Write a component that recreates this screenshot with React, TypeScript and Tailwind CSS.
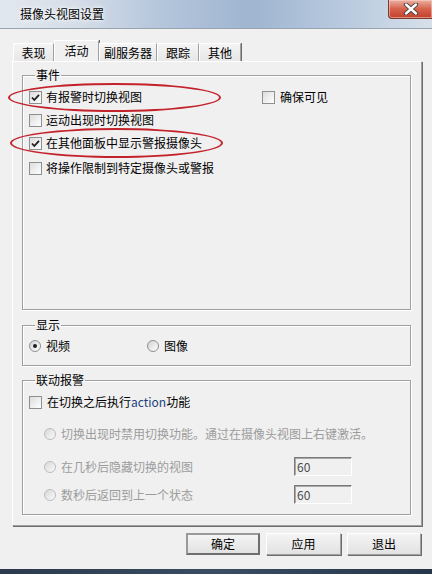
import React from 'react';

const Check: React.FC<{ checked?: boolean }> = ({ checked }) => (
  <span className="relative flex h-[13px] w-[13px] shrink-0 items-center justify-center border border-[#8e8f8f] bg-[linear-gradient(135deg,#dcdcdc,#ffffff)]">
    {checked && (
      <svg width="11" height="11" viewBox="0 0 11 11">
        <path d="M2 5.5 L4.3 8 L9 2.8" fill="none" stroke="#1e1e1e" strokeWidth="1.8" />
      </svg>
    )}
  </span>
);

const Radio: React.FC<{ checked?: boolean; disabled?: boolean }> = ({ checked, disabled }) => (
  <span
    className={`flex h-[12px] w-[12px] shrink-0 items-center justify-center rounded-full border ${
      disabled ? 'border-[#bdbdbd] bg-[linear-gradient(135deg,#d8d8d8,#fafafa)]' : 'border-[#8e8f8f] bg-[linear-gradient(135deg,#d2d2d2,#ffffff)]'
    }`}
  >
    {checked && <span className="h-[4px] w-[4px] rounded-full bg-[#1e1e1e]" />}
  </span>
);

const Tab: React.FC<{ label: string; w: string; active?: boolean }> = ({ label, w, active }) => (
  <div
    className={`flex items-center justify-center border-l border-t border-white border-r border-r-[#a0a0a0] shadow-[1px_0_0_#6d6d6d] ${w} ${
      active ? 'h-[22px] bg-[#f0f0f0] pb-[2px]' : 'h-[19px] bg-[linear-gradient(#f4f4f4,#e6e6e6)]'
    }`}
  >
    {label}
  </div>
);

const NumBox: React.FC<{ value: string }> = ({ value }) => (
  <div className="flex h-[19px] w-[58px] items-center border-l border-t border-[#7a7a7a] border-b border-r border-b-white border-r-white bg-[#f0f0f0] pl-[2px] text-[#4a4a4a] shadow-[inset_1px_1px_0_#a8a8a8]">
    {value}
  </div>
);

const group = 'border border-[#a0a0a0] shadow-[1px_1px_0_#fff,inset_1px_1px_0_#fff]';

const Btn: React.FC<{ label: string; w: string; primary?: boolean }> = ({ label, w, primary }) => (
  <button
    className={`flex h-[22px] items-center justify-center bg-[linear-gradient(#f4f4f4,#e2e2e2)] ${w} ${
      primary
        ? 'border-2 border-[#6e6e6e] border-t-[#9a9a9a] border-l-[#9a9a9a]'
        : 'border border-[#a0a0a0] border-t-white border-l-white shadow-[1px_1px_0_#6d6d6d]'
    }`}
  >
    {label}
  </button>
);

export default function App() {
  return (
    <div className="relative flex h-[574px] w-[432px] flex-col overflow-hidden bg-[#f0f0f0] font-['Noto_Sans_CJK_SC',sans-serif] text-[12px] leading-[16px] text-black">
      {/* title bar */}
      <div className="flex h-[29px] items-start border-b border-[#9aa3ae] bg-[linear-gradient(90deg,#e2e8ef_0%,#d4dde8_18%,#b3c5db_38%,#9fb5d0_58%,#b8cadf_80%,#d6e0ea_100%)]">
        <div className="ml-[20px] mt-[6px] text-[12px] leading-[16px] [text-shadow:0_0_6px_#fff,0_0_3px_#fff]">摄像头视图设置</div>
        <div className="ml-auto flex h-[19px] w-[44px] items-center justify-center rounded-bl-[4px] border border-t-0 border-r-0 border-[#7a3a30] bg-[linear-gradient(#ebb0a3,#d6624c_50%,#c2402b)] shadow-[inset_0_0_0_1px_rgba(255,220,210,0.5)]">
          <svg width="16" height="12" viewBox="0 0 16 12">
            <path d="M3 1.5 L13 10.5 M13 1.5 L3 10.5" stroke="#3b3b3b" strokeWidth="4.2" strokeLinecap="round" />
            <path d="M3 1.5 L13 10.5 M13 1.5 L3 10.5" stroke="#fff" strokeWidth="2.4" strokeLinecap="round" />
          </svg>
        </div>
      </div>

      {/* tabs + panel */}
      <div className="flex flex-col px-[12px] pt-[12px]">
        <div className="ml-[1px] flex h-[21px] items-end">
          <Tab label="表现" w="w-[41px]" />
          <Tab label="活动" w="w-[45px]" active />
          <Tab label="副服务器" w="w-[58px]" />
          <Tab label="跟踪" w="w-[42px]" />
          <Tab label="其他" w="w-[42px]" />
        </div>
        <div className="-mt-[1px] flex h-[465px] w-[410px] flex-col border-l border-t border-white border-b border-r border-b-[#a0a0a0] border-r-[#a0a0a0] pl-[9px] pt-[5px] shadow-[1px_1px_0_#6d6d6d]">
          {/* 事件 */}
          <fieldset className={`h-[243px] w-[389px] ${group} flex flex-col pl-[6px]`}>
            <legend className="ml-[6px] px-[1px] leading-[16px]">事件</legend>
            <div className="mt-[6px] flex h-[16px] items-center">
              <div className="flex w-[233px] items-center gap-[4px]">
                <Check checked />
                <span>有报警时切换视图</span>
              </div>
              <div className="flex items-center gap-[5px]">
                <Check />
                <span>确保可见</span>
              </div>
            </div>
            <div className="mt-[7px] flex h-[16px] items-center gap-[4px]">
              <Check />
              <span>运动出现时切换视图</span>
            </div>
            <div className="mt-[7px] flex h-[16px] items-center gap-[4px]">
              <Check checked />
              <span>在其他面板中显示警报摄像头</span>
            </div>
            <div className="mt-[9px] flex h-[16px] items-center gap-[4px]">
              <Check />
              <span>将操作限制到特定摄像头或警报</span>
            </div>
          </fieldset>

          {/* 显示 */}
          <fieldset className={`mt-[7px] h-[49px] w-[389px] ${group} flex flex-col pl-[6px]`}>
            <legend className="ml-[6px] px-[1px] leading-[16px]">显示</legend>
            <div className="mt-[5px] flex h-[16px] items-center">
              <div className="flex w-[118px] items-center gap-[5px]">
                <Radio checked />
                <span>视频</span>
              </div>
              <div className="flex items-center gap-[5px]">
                <Radio />
                <span>图像</span>
              </div>
            </div>
          </fieldset>

          {/* 联动报警 */}
          <fieldset className={`mt-[6px] h-[143px] w-[389px] ${group} flex flex-col pl-[6px]`}>
            <legend className="ml-[6px] px-[1px] leading-[16px]">联动报警</legend>
            <div className="mt-[6px] flex h-[16px] items-center gap-[5px]">
              <Check />
              <span>
                在切换之后执行<span className="text-[#23407e]">action</span>功能
              </span>
            </div>
            <div className="mt-[16px] flex h-[16px] items-center gap-[5px] pl-[15px] text-[#9c9c9c]">
              <Radio disabled />
              <span>切换出现时禁用切换功能。通过在摄像头视图上右键激活。</span>
            </div>
            <div className="mt-[15px] flex h-[19px] items-center pl-[15px] text-[#9c9c9c]">
              <div className="flex w-[250px] items-center gap-[5px]">
                <Radio disabled />
                <span>在几秒后隐藏切换的视图</span>
              </div>
              <NumBox value="60" />
            </div>
            <div className="mt-[9px] flex h-[19px] items-center pl-[15px] text-[#9c9c9c]">
              <div className="flex w-[250px] items-center gap-[5px]">
                <Radio disabled />
                <span>数秒后返回到上一个状态</span>
              </div>
              <NumBox value="60" />
            </div>
          </fieldset>
        </div>
      </div>

      {/* buttons */}
      <div className="mt-[7px] flex justify-end gap-[6px] pr-[11px]">
        <Btn label="确定" w="w-[74px]" primary />
        <Btn label="应用" w="w-[75px]" />
        <Btn label="退出" w="w-[74px]" />
      </div>

      <div className="mt-auto h-[5px] bg-[linear-gradient(90deg,#2b3a4c,#3a4d63,#26364a)]" />

      {/* red annotation ellipses */}
      <div className="pointer-events-none absolute left-[8px] top-[83px] h-[29px] w-[213px] rounded-[50%] border-2 border-[#c4222b]" />
      <div className="pointer-events-none absolute left-[10px] top-[128px] h-[30px] w-[213px] rounded-[50%] border-2 border-[#c4222b]" />
    </div>
  );
}
